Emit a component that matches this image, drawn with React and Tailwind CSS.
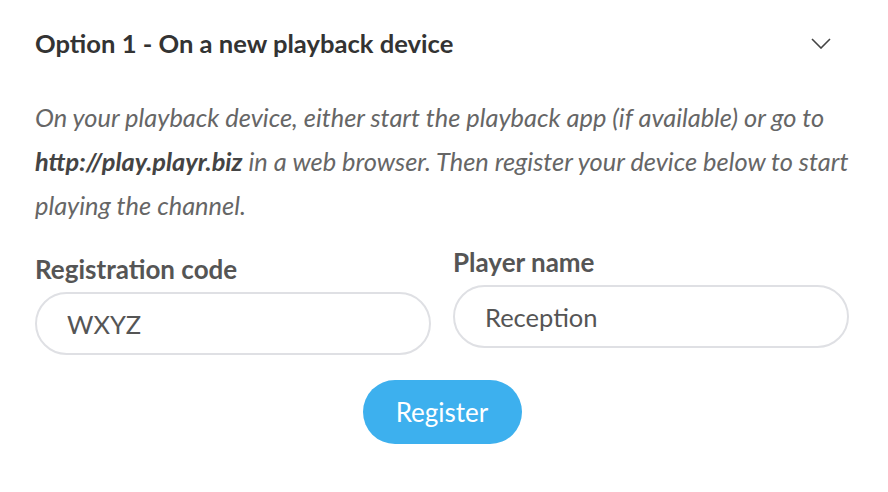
import React, { useState } from "react";

const font = { fontFamily: "Lato, 'Noto Sans', sans-serif" };

export default function App() {
    const [code, setCode] = useState("WXYZ");
    const [name, setName] = useState("Reception");

    return (
        <div className="w-[888px] h-[492px] bg-white px-[35px] pt-[27px]" style={font}>
            <div className="flex items-center justify-between h-[32px]">
                <h2 className="text-[25.6px] font-bold text-[#333]">Option 1 - On a new playback device</h2>
                <svg width="20" height="11" viewBox="0 0 20 11" className="mr-[22px]">
                    <path d="M1 1 L10 10 L19 1" fill="none" stroke="#444" strokeWidth="1.6" />
                </svg>
            </div>

            <p className="mt-[36px] text-[25.4px] italic leading-[44px] text-[#666]">
                On your playback device, either start the playback app (if available) or go to{" "}
                <strong className="font-bold text-[#444]">http://play.playr.biz</strong> in a web browser. Then register
                your device below to start playing the channel.
            </p>

            <div className="grid grid-cols-2 gap-[22px] mt-[21px] w-[814px]">
                <div className="mt-[7px]">
                    <label className="block text-[26px] font-bold text-[#555] leading-[28px]">Registration code</label>
                    <input
                        value={code}
                        onChange={e => setCode(e.target.value)}
                        className="mt-[9px] w-full h-[63px] rounded-full border-2 border-[#dfe0e4] px-[30px] text-[25.5px] text-[#555] outline-none"
                        style={font}
                    />
                </div>
                <div>
                    <label className="block text-[26px] font-bold text-[#555] leading-[28px]">Player name</label>
                    <input
                        value={name}
                        onChange={e => setName(e.target.value)}
                        className="mt-[9px] w-full h-[63px] rounded-full border-2 border-[#dfe0e4] px-[30px] text-[25.5px] text-[#555] outline-none"
                        style={font}
                    />
                </div>
            </div>

            <div className="flex justify-center w-[814px] mt-[25px]">
                <button className="w-[159px] h-[64px] rounded-full bg-[#3db0ee] text-white text-[26px]">
                    Register
                </button>
            </div>
        </div>
    );
}
